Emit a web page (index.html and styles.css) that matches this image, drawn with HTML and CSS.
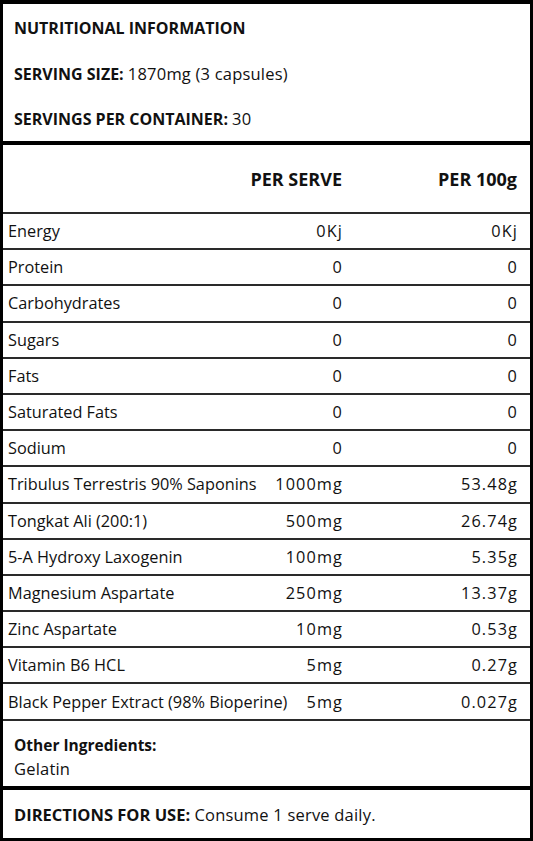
FILE: index.html
```html
<!DOCTYPE html>
<html lang="en">
<head>
    <meta charset="UTF-8">
    <meta name="viewport" content="width=device-width, initial-scale=1.0">
    <title>Nutritional Information</title>
    <link rel="stylesheet" href="styles.css">
</head>
<body>
    <div class="label">
        <div class="summary">
            <p class="title"><strong>NUTRITIONAL INFORMATION</strong></p>
            <p><strong>SERVING SIZE:</strong> <span class="val">1870mg (3 capsules)</span></p>
            <p><strong>SERVINGS PER CONTAINER:</strong> <span class="val">30</span></p>
        </div>

        <div class="facts">
            <div class="row head">
                <span></span>
                <span class="num">PER SERVE</span>
                <span class="num">PER 100g</span>
            </div>
            <div class="row"><span>Energy</span><span class="num">0Kj</span><span class="num">0Kj</span></div>
            <div class="row"><span>Protein</span><span class="num">0</span><span class="num">0</span></div>
            <div class="row"><span>Carbohydrates</span><span class="num">0</span><span class="num">0</span></div>
            <div class="row"><span>Sugars</span><span class="num">0</span><span class="num">0</span></div>
            <div class="row"><span>Fats</span><span class="num">0</span><span class="num">0</span></div>
            <div class="row"><span>Saturated Fats</span><span class="num">0</span><span class="num">0</span></div>
            <div class="row"><span>Sodium</span><span class="num">0</span><span class="num">0</span></div>
            <div class="row"><span>Tribulus Terrestris 90% Saponins</span><span class="num">1000mg</span><span class="num">53.48g</span></div>
            <div class="row"><span>Tongkat Ali (200:1)</span><span class="num">500mg</span><span class="num">26.74g</span></div>
            <div class="row"><span>5-A Hydroxy Laxogenin</span><span class="num">100mg</span><span class="num">5.35g</span></div>
            <div class="row"><span>Magnesium Aspartate</span><span class="num">250mg</span><span class="num">13.37g</span></div>
            <div class="row"><span>Zinc Aspartate</span><span class="num">10mg</span><span class="num">0.53g</span></div>
            <div class="row"><span>Vitamin B6 HCL</span><span class="num">5mg</span><span class="num">0.27g</span></div>
            <div class="row"><span>Black Pepper Extract (98% Bioperine)</span><span class="num">5mg</span><span class="num">0.027g</span></div>
        </div>

        <div class="other">
            <strong>Other Ingredients:</strong>
            <span class="val">Gelatin</span>
        </div>

        <div class="directions">
            <p><strong>DIRECTIONS FOR USE:</strong> <span class="val">Consume 1 serve daily.</span></p>
        </div>
    </div>
</body>
</html>
```

FILE: styles.css
```css
:root {
    --ink: #111;
    --line: #000;
    --row-line: #2a2a2a;
}

* {
    margin: 0;
    padding: 0;
    box-sizing: border-box;
}

body {
    font-family: 'Open Sans', 'Liberation Sans', sans-serif;
    color: var(--ink);
    background: #fff;
    width: 533px;
    height: 841px;
    overflow: hidden;
}

.label {
    height: 841px;
    border: 3px solid var(--line);
    border-top-width: 4px;
    display: flex;
    flex-direction: column;
}

strong {
    font-weight: 700;
}

.val {
    font-size: 16.5px;
    letter-spacing: 0.2px;
}

.summary {
    height: 141px;
    border-bottom: 4px solid var(--line);
    padding: 13px 11px 0;
    display: flex;
    flex-direction: column;
    gap: 23.5px;
    font-size: 16px;
    line-height: 22px;
}

.facts {
    display: flex;
    flex-direction: column;
}

.row {
    display: grid;
    grid-template-columns: minmax(0, 1fr) 110px 175px;
    align-items: center;
    height: 36.2px;
    padding: 0 13px 0 5px;
    border-bottom: 2px solid var(--row-line);
    font-size: 16.3px;
    white-space: nowrap;
}

.row .num {
    letter-spacing: 1.1px;
    margin-right: -1px;
}

.row.head {
    height: 69px;
    font-weight: 700;
    font-size: 18px;
}

.row.head .num {
    letter-spacing: 0;
    margin-right: 0;
}

.num {
    text-align: right;
}

.other {
    flex: 1;
    border-bottom: 4px solid var(--line);
    padding: 13px 11px 0;
    display: flex;
    flex-direction: column;
    font-size: 15.5px;
    line-height: 23px;
}

.directions {
    height: 48px;
    padding: 0 11px;
    display: flex;
    align-items: center;
    font-size: 16.5px;
}
```
